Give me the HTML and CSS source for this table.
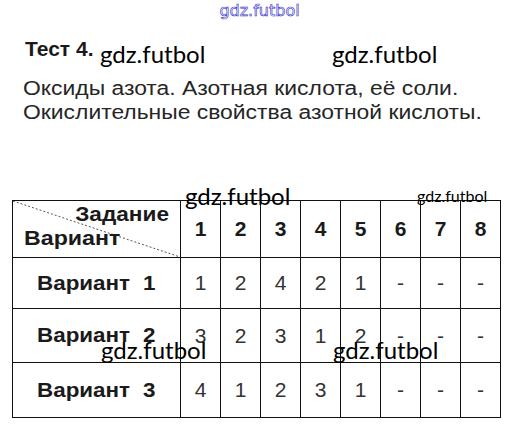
FILE: index.html
```html
<!DOCTYPE html>
<html lang="ru">
<head>
<meta charset="utf-8">
<link rel="stylesheet" href="styles.css">
</head>
<body>
<div class="page">
  <div class="wm-top">gdz.futbol</div>
  <div class="intro">
    <div class="title">Тест 4.</div>
    <p class="topic">Оксиды азота. Азотная кислота, её соли.<br>Окислительные свойства азотной кислоты.</p>
    <span class="wm wm-a">gdz.futbol</span>
    <span class="wm wm-b">gdz.futbol</span>
  </div>
  <div class="table-wrap">
    <table class="grid">
      <tr class="head">
        <th class="corner">
          <svg class="diag" viewBox="0 0 100 100" preserveAspectRatio="none"><line x1="0" y1="0" x2="100" y2="100" stroke="#555" stroke-width="1" stroke-dasharray="2 2" vector-effect="non-scaling-stroke"/></svg>
          <span class="task">Задание</span>
          <span class="variant">Вариант</span>
        </th>
        <th>1</th><th>2</th><th>3</th><th>4</th><th>5</th><th>6</th><th>7</th><th>8</th>
      </tr>
      <tr class="r1">
        <th class="rowname"><span class="stretch">Вариант 1</span></th>
        <td>1</td><td>2</td><td>4</td><td>2</td><td>1</td><td>-</td><td>-</td><td>-</td>
      </tr>
      <tr class="r2">
        <th class="rowname"><span class="stretch">Вариант 2</span></th>
        <td>3</td><td>2</td><td>3</td><td>1</td><td>2</td><td>-</td><td>-</td><td>-</td>
      </tr>
      <tr class="r3">
        <th class="rowname"><span class="stretch">Вариант 3</span></th>
        <td>4</td><td>1</td><td>2</td><td>3</td><td>1</td><td>-</td><td>-</td><td>-</td>
      </tr>
    </table>
    <span class="wm wm-c">gdz.futbol</span>
    <span class="wm wm-small">gdz.futbol</span>
    <span class="wm wm-d">gdz.futbol</span>
    <span class="wm wm-e">gdz.futbol</span>
  </div>
</div>
</body>
</html>
```

FILE: styles.css
```css
html, body {
  margin: 0;
  padding: 0;
  background: #ffffff;
}

.page {
  width: 517px;
  height: 436px;
  position: relative;
  overflow: hidden;
  font-family: "Liberation Sans", Arial, sans-serif;
  color: #222;
}

.wm-top {
  text-align: center;
  font-family: "DejaVu Sans", sans-serif;
  font-size: 16px;
  line-height: 22px;
  height: 22px;
  color: #f4f4ff;
  -webkit-text-stroke: 0.6px #3232c8;
  padding-left: 2px;
}

.intro {
  position: relative;
  padding-left: 23px;
  padding-top: 15px;
}

.title {
  font-weight: bold;
  font-size: 21px;
  line-height: 24px;
  color: #1a1a1a;
  margin-left: 2px;
}

.topic {
  width: max-content;
  margin: 15px 0 0 0;
  font-size: 20px;
  line-height: 24px;
  color: #262626;
  white-space: nowrap;
  transform: scaleX(1.144);
  transform-origin: 0 0;
}

.wm {
  position: absolute;
  font-family: Lato, "Open Sans", sans-serif;
  font-size: 24px;
  line-height: 24px;
  color: #000;
  white-space: nowrap;
}

.wm-a { left: 100px; top: 20px; }
.wm-b { left: 332px; top: 20px; }

.table-wrap {
  position: relative;
  margin-top: 76px;
  padding-left: 12px;
}

.grid {
  border-collapse: collapse;
  table-layout: fixed;
  width: 489px;
}

.grid th, .grid td {
  border: 1px solid #111;
  padding: 0;
  text-align: center;
}

.grid .head th {
  box-sizing: border-box;
  width: 40px;
  height: 57px;
  font-size: 21px;
  font-weight: bold;
  color: #1a1a1a;
  vertical-align: middle;
  line-height: 24px;
}

.grid .head th.corner {
  width: 168px;
  position: relative;
  text-align: left;
}

.diag {
  position: absolute;
  left: 0;
  top: 0;
  width: 100%;
  height: 100%;
}

.task {
  position: absolute;
  right: 11px;
  top: 1px;
  font-size: 20px;
  transform: scaleX(1.13);
  transform-origin: 100% 0;
}

.variant {
  position: absolute;
  left: 11px;
  top: 25px;
  font-size: 20px;
  transform: scaleX(1.16);
  transform-origin: 0 0;
}

.grid td {
  font-size: 21px;
  color: #333;
}

.grid th.rowname {
  font-size: 20px;
  font-weight: bold;
  color: #1a1a1a;
  text-align: left;
  padding-left: 24px;
  white-space: nowrap;
}

.stretch {
  display: inline-block;
  word-spacing: 6px;
  transform: scaleX(1.12);
  transform-origin: 0 50%;
}

.r1 th, .r1 td { height: 50px; }
.r2 th, .r2 td { height: 53px; }
.r3 th, .r3 td { height: 54px; }

.wm-c { left: 185px; top: -16px; }
.wm-small { left: 417px; top: -12px; font-size: 16px; line-height: 16px; }
.wm-d { left: 101px; top: 138px; }
.wm-e { left: 333px; top: 138px; }
```
